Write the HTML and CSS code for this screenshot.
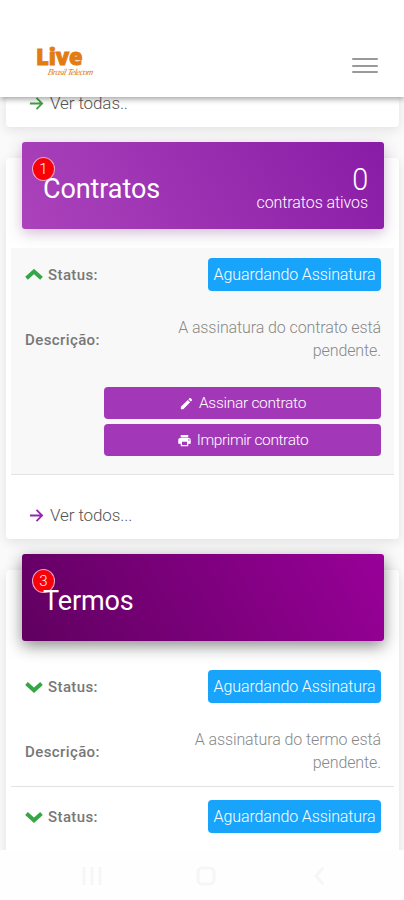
FILE: index.html
```html
<!DOCTYPE html>
<html lang="pt-BR">
<head>
<meta charset="utf-8">
<meta name="viewport" content="width=device-width, initial-scale=1">
<title>Live Brasil Telecom</title>
<link rel="stylesheet" href="styles.css">
</head>
<body>
<header class="topbar">
  <div class="logo"><span class="logo-name">Live</span><span class="logo-sub">Brasil Telecom</span></div>
  <div class="menu"><span></span><span></span><span></span></div>
</header>
<main class="content">
  <section class="card card-first">
    <a class="more"><svg class="arrow green" viewBox="0 0 16 16"><path d="M1 8H14M8 2L14 8L8 14"/></svg><span>Ver todas..</span></a>
  </section>
  <section class="card contracts">
    <div class="card-head head-contracts">
      <span class="badge">1</span>
      <h2>Contratos</h2>
      <div class="count"><span class="num">0</span><span class="count-label">contratos ativos</span></div>
    </div>
    <div class="item open">
      <div class="row status">
        <span class="label"><svg class="chev" viewBox="0 0 18 12"><path d="M1.500 9.300L9 2.500L16.500 9.300"/></svg><b>Status:</b></span>
        <span class="tag">Aguardando Assinatura</span>
      </div>
      <div class="row desc">
        <b>Descrição:</b>
        <p>A assinatura do contrato está<br>pendente.</p>
      </div>
      <div class="buttons">
        <a class="btn"><svg viewBox="0 0 24 24"><path d="M3 17.2V21h3.8L17.8 9.900l-3.700-3.700zM20.700 7c.4-.4.4-1 0-1.400l-2.300-2.300c-.4-.4-1-.4-1.400 0l-1.900 1.900 3.700 3.700z"/></svg><span>Assinar contrato</span></a>
        <a class="btn btn-print"><svg viewBox="0 0 24 24"><path fill-rule="evenodd" d="M19 8H5c-1.700 0-3 1.300-3 3v6h4v4h12v-4h4v-6c0-1.700-1.300-3-3-3zm-3 11H8v-5h8zM19 12.500a1.200 1.200 0 1 1 0-2.400 1.200 1.200 0 0 1 0 2.400zM18 3H6v4h12z"/></svg><span>Imprimir contrato</span></a>
      </div>
    </div>
    <a class="more more-todos"><svg class="arrow purple" viewBox="0 0 16 16"><path d="M1 8H14M8 2L14 8L8 14"/></svg><span>Ver todos...</span></a>
  </section>
  <section class="card terms">
    <div class="card-head head-terms">
      <span class="badge">3</span>
      <h2>Termos</h2>
    </div>
    <div class="item">
      <div class="row status">
        <span class="label"><svg class="chev" viewBox="0 0 18 12"><path d="M1.500 2.500L9 9.300L16.500 2.500"/></svg><b>Status:</b></span>
        <span class="tag">Aguardando Assinatura</span>
      </div>
      <div class="row desc">
        <b>Descrição:</b>
        <p>A assinatura do termo está<br>pendente.</p>
      </div>
    </div>
    <div class="item last">
      <div class="row status">
        <span class="label"><svg class="chev" viewBox="0 0 18 12"><path d="M1.500 2.500L9 9.300L16.500 2.500"/></svg><b>Status:</b></span>
        <span class="tag">Aguardando Assinatura</span>
      </div>
    </div>
  </section>
</main>
<nav class="sysnav">
  <svg viewBox="0 0 20 20"><path d="M2 1V19M10 1V19M18 1V19"/></svg>
  <svg viewBox="0 0 20 20"><rect x="2" y="2" width="16" height="16" rx="4"/></svg>
  <svg viewBox="0 0 20 20"><path d="M13 2L6 10L13 18"/></svg>
</nav>
</body>
</html>
```

FILE: styles.css
```css
* { box-sizing: border-box; }
body {
  margin: 0;
  height: 900px;
  display: flex;
  flex-direction: column;
  overflow: hidden;
  background: #fefefe;
  font-family: Roboto, "Liberation Sans", sans-serif;
  font-weight: 300;
  font-size: 16px;
  color: #666;
}
.topbar {
  flex: none;
  height: 97px;
  padding: 46px 26px 0 36px;
  display: flex;
  justify-content: space-between;
  background: #fff;
  box-shadow: 0 2px 6px rgba(0, 0, 0, .38);
  z-index: 2;
}
.logo { display: flex; flex-direction: column; color: #e17b12; }
.logo-name {
  font: 800 22px/21px "Open Sans", sans-serif;
  letter-spacing: -.1px;
  -webkit-text-stroke: .9px #e17b12;
}
.logo-sub {
  margin: -1px 0 0 12px;
  font: italic 400 9px/12px "Liberation Serif", serif;
  letter-spacing: -.65px;
  transform: skewX(-12deg);
  white-space: nowrap;
}
.menu { width: 26px; padding-top: 12px; display: flex; flex-direction: column; gap: 4.500px; }
.menu span { height: 2px; background: #999; border-radius: 1px; }
.content { flex: none; height: 753px; overflow: hidden; background: #fafafa; }
.card {
  margin: 0 5px 31px 6px;
  background: #fff;
  border-radius: 4px;
  box-shadow: 0 3px 12px rgba(0, 0, 0, .1);
}
.card-first { height: 30px; }
.more { display: flex; align-items: center; gap: 6px; padding-left: 23px; line-height: 20px; font-size: 17px; letter-spacing: -.1px; color: #555; }
.card-first .more { height: 12px; }
.arrow { width: 15px; height: 15px; fill: none; stroke-width: 1.900; }
.green { stroke: #43a047; }
.purple { stroke: #9427ac; }
.contracts { height: 381px; }
.card-head {
  position: relative;
  top: -16px;
  height: 87px;
  margin: 0 15px 0 16px;
  padding: 0 16px 0 21px;
  display: flex;
  justify-content: space-between;
  border-radius: 3px;
  color: #fff;
}
.head-contracts { background: linear-gradient(60deg, #ab43bb, #891ca6); box-shadow: 0 4px 14px rgba(120, 60, 130, .34); }
.head-terms { background: linear-gradient(60deg, #600060, #990099); box-shadow: 0 5px 16px rgba(0, 0, 0, .46); }
.badge {
  position: absolute;
  left: 10px;
  top: 15px;
  width: 23px;
  height: 24px;
  border-radius: 50%;
  border: 1px solid #eba7c5;
  background: #fa0008;
  text-align: center;
  font-size: 15px;
  line-height: 22px;
}
h2 { margin: 0; padding-top: 30px; font-weight: 400; font-size: 27px; line-height: 34px; letter-spacing: -.1px; position: relative; }
.count { display: flex; flex-direction: column; align-items: flex-end; padding-top: 21px; }
.num { font-size: 31px; line-height: 34px; transform: scaleX(.93); transform-origin: right; }
.count-label { font-size: 16px; line-height: 12px; letter-spacing: -.08px; }
.item { margin: 0 5px; padding: 0 13px 0 14px; border-bottom: 1px solid #e2e2e2; }
.card-head + .item { margin-top: 3px; }
.open { height: 227px; background: #f8f8f8; }
.row { display: flex; justify-content: space-between; }
.status { padding-top: 10px; }
.label { display: flex; align-items: center; gap: 5px; }
.chev { width: 18px; height: 12px; fill: none; stroke: #34a644; stroke-width: 3.900; }
b { font-weight: 500; font-size: 15px; letter-spacing: .4px; color: #777; }
.tag { height: 33px; width: 173px; border-radius: 4px; background: #18a4fb; color: #fff; text-align: center; font-size: 16px; letter-spacing: -.12px; line-height: 33px; white-space: nowrap; }
.desc { align-items: center; margin-top: 26px; }
p { margin: 0; text-align: right; line-height: 22.500px; letter-spacing: -.1px; color: #888; }
.buttons { margin: 25px 0 0 79px; display: flex; flex-direction: column; gap: 5px; }
.btn { height: 32px; display: flex; align-items: center; justify-content: center; gap: 5px; border-radius: 4px; background: #a238b8; color: #fff; font-size: 15.500px; letter-spacing: -.28px; }
.btn-print { letter-spacing: -.4px; }
.btn svg { width: 15px; height: 15px; fill: #fff; }
.more-todos { padding-top: 30px; }
.terms { height: 340px; }
.terms .item { height: 130px; }
.terms .card-head + .item { margin-top: 0; }
.terms .status, .terms .card-head + .item .status { padding-top: 12px; }
.terms .status { position: relative; top: 1px; }
.terms .desc { margin-top: 27px; }
.terms .last { border: 0; }
.sysnav { flex: 1; display: flex; justify-content: space-between; align-items: center; padding: 2px 74px 0 82px; background: #fefefe; }
.sysnav svg { width: 20px; height: 20px; fill: none; stroke: #f6f6f6; stroke-width: 3; }
```
